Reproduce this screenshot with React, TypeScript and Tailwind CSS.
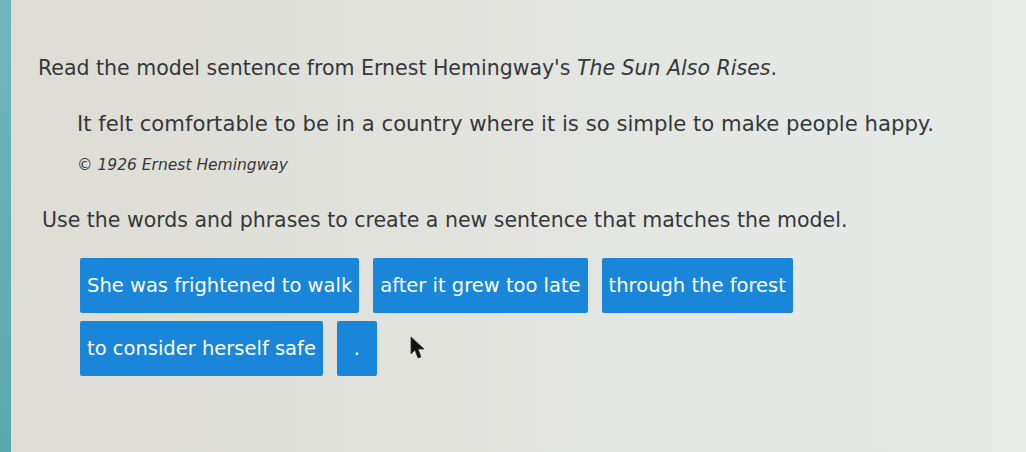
export default function App() {
  const tiles = [
    "She was frightened to walk",
    "after it grew too late",
    "through the forest",
    "to consider herself safe",
    ".",
  ]

  return (
    <div className="relative flex h-[452px] w-[1026px] overflow-hidden bg-gradient-to-r from-[#dddcd5] via-[#e3e4df] to-[#e6ebe8] font-['DejaVu_Sans',sans-serif] text-[#35383b]">
      {/* left frame strip */}
      <div className="w-[11px] shrink-0 bg-gradient-to-b from-[#72b6bd] to-[#5aa7ae]" />

      <div className="flex flex-col pl-[27px] pt-[54px]">
        <p className="text-[20.5px] leading-[28px]">
          Read the model sentence from Ernest Hemingway's <i>The Sun Also Rises</i>.
        </p>

        <p className="mt-[28px] pl-[39px] text-[21.2px] leading-[28px]">
          It felt comfortable to be in a country where it is so simple to make people happy.
        </p>

        <p className="mt-[16px] pl-[39px] text-[15.5px] italic leading-[22px]">
          © 1926 Ernest Hemingway
        </p>

        <p className="mt-[30px] pl-[4px] text-[20.5px] leading-[28px]">
          Use the words and phrases to create a new sentence that matches the model.
        </p>

        <div className="mt-[24px] flex w-[800px] flex-wrap gap-x-[14px] gap-y-[8px] pl-[42px]">
          {tiles.map((t) => (
            <div
              key={t}
              className={`flex h-[55px] items-center rounded-[2px] bg-[#1a86d9] text-[19.5px] text-white ${
                t === "." ? "w-[40px] justify-center" : "px-[7px]"
              }`}
            >
              {t}
            </div>
          ))}
        </div>
      </div>

      {/* mouse pointer */}
      <svg
        className="absolute left-[410px] top-[336px]"
        width="16"
        height="24"
        viewBox="0 0 16 24"
      >
        <path d="M1 1 L1 18 L5 14 L8 22 L11 21 L8 13 L14 13 Z" fill="#111" stroke="#333" strokeWidth="0.8" />
      </svg>
    </div>
  )
}
